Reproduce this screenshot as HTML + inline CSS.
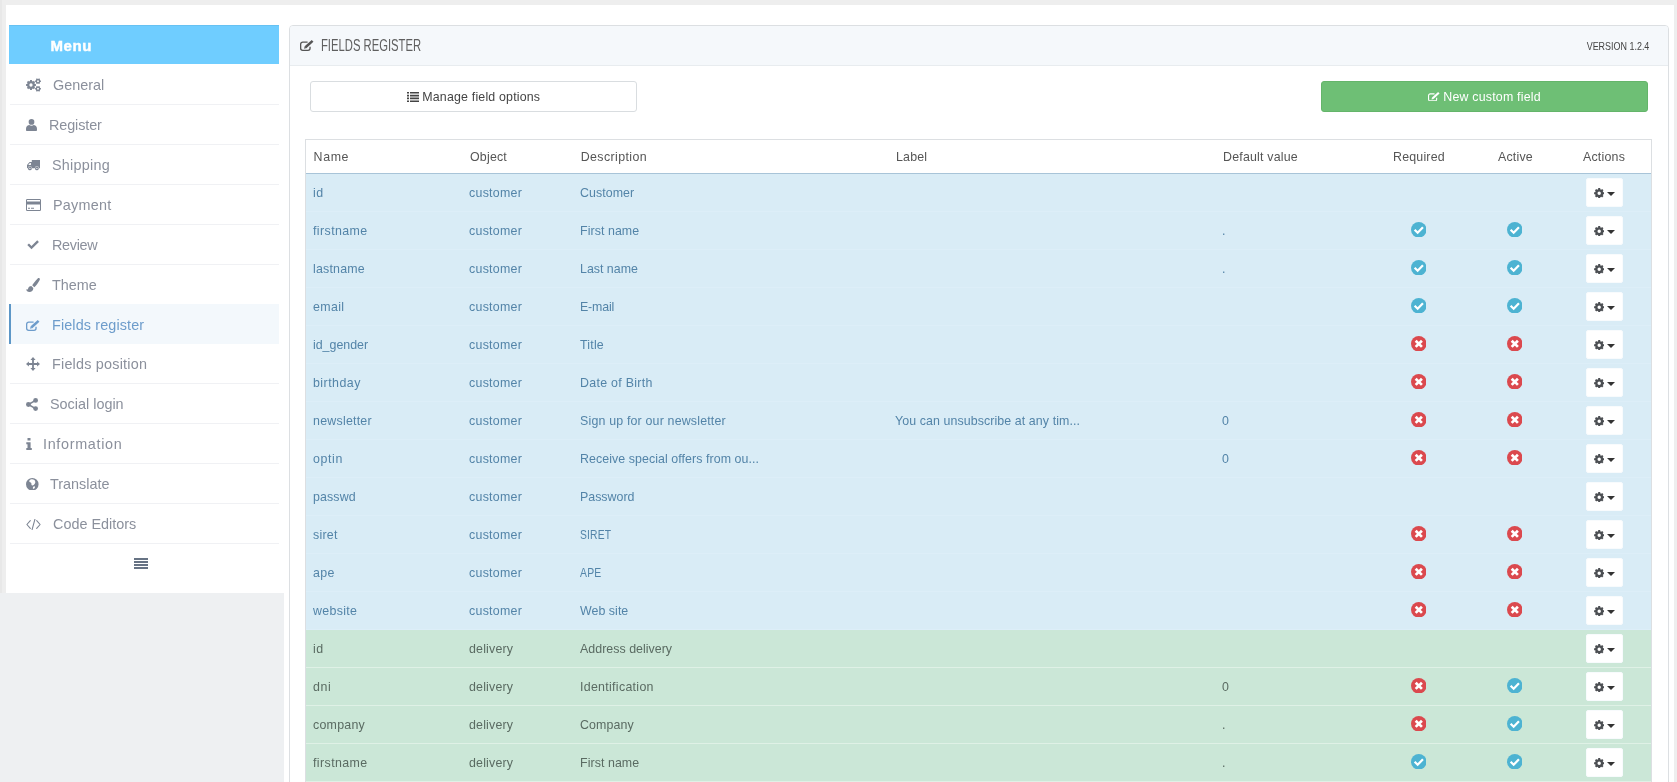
<!DOCTYPE html>
<html><head><meta charset="utf-8"><title>Fields register</title><style>
*{box-sizing:border-box;margin:0;padding:0}
html,body{width:1677px;height:782px;overflow:hidden}
body{background:#eeeeee;font-family:"Liberation Sans",sans-serif;color:#555;position:relative}
.abs{position:absolute}
#wrap{position:absolute;left:0;top:0;width:1677px;height:782px;will-change:transform}
#white-main{left:284px;top:5px;width:1390px;height:777px;background:#fff}
#white-side{left:6px;top:5px;width:278px;height:588px;background:#fff}
#menuhead{left:9px;top:25px;width:270px;height:39px;background:#6fcdff;border-top:1px solid #66c1f2;color:#fff;font-weight:bold;font-size:15px;letter-spacing:.55px;-webkit-text-stroke:.45px #fff;line-height:39px;padding-left:41.5px}
.mi{left:9px;width:270px;height:40px;color:#8b909c;font-size:14.4px;line-height:42px;white-space:nowrap}
.mi .sep{position:absolute;left:1px;right:0;bottom:-1px;height:1px;background:#f0f1f4}
.mi .icw{position:absolute;left:17px;top:1px;height:40px;display:flex;align-items:center;color:#7d8593}
.mi .tx{position:absolute;top:0}
.mi.act{z-index:2;background:#f3f8fc;border-left:2px solid #5d97c7;color:#6d9ccb}
.mi.act .icw{left:15px;color:#6d9ccb}
svg.ic{fill:currentColor;display:block}
#panel{left:289px;top:25px;width:1380px;height:800px;border:1px solid #dcdfe2;border-radius:4px;background:#fff}
#phead{left:290px;top:26px;width:1378px;height:40px;background:#f5f8fb;border-bottom:1px solid #e8ecef;border-radius:3px 3px 0 0}
#ptitle{left:321px;top:26px;height:39px;line-height:40px;font-size:15.6px;color:#5f5f5f;white-space:nowrap;transform-origin:0 50%;transform:scaleX(.7215)}
#pver{top:26px;height:39px;line-height:40px;font-size:11.2px;color:#444;white-space:nowrap;transform-origin:100% 50%;transform:scaleX(.8);right:28px}
#pico{left:300px;top:40px;color:#555}
.btn{top:81px;height:31px;border-radius:3px;font-size:12.4px;line-height:31px;white-space:nowrap}
.btn span{position:absolute;top:0}
.btn svg{position:absolute;fill:currentColor}
#b1{left:310px;width:327px;border:1px solid #d9dde0;background:#fff;color:#444}
#b2{left:1321px;width:327px;border:1px solid #64b56a;background:#6ebf75;color:#fff}
#tbl{left:305px;top:139px;width:1347px;height:660px;border:1px solid #dcdfe2;border-bottom:0}
.th{top:140px;height:33px;line-height:34px;font-size:12.4px;letter-spacing:.2px;color:#555;white-space:nowrap}
#thline{left:306px;top:173px;width:1345px;height:1px;background:#a8c4d8}
.row{left:306px;width:1345px;height:38px}
.row.b{background:#d9ecf6;color:#5384a8}
.row.g{background:#cbe7d7;color:#5a6b62}
.row .ln{position:absolute;left:0;right:0;bottom:0;height:1px}
.row.b .ln{background:#ddeef8}
.row.g .ln{background:#dff1e6}
.c{position:absolute;top:0;height:38px;line-height:38px;font-size:12.4px;letter-spacing:.22px;white-space:nowrap}
.st{position:absolute;top:9.7px}
.ab{position:absolute;left:1280px;top:4px;width:37px;height:29px;background:#fff;border:1px solid #f8fbfd;border-radius:2px;color:#4c4f53}
.ab svg.g1{position:absolute;left:6.8px;top:8.5px;fill:currentColor}
.ab i{position:absolute;left:20px;top:13px;width:0;height:0;border-left:4px solid transparent;border-right:4px solid transparent;border-top:4px solid #333}
</style></head><body>
<div id="wrap">
<div class="abs" style="left:0;top:0;width:2px;height:782px;background:#e8e8e8"></div><div class="abs" style="left:6px;top:593px;width:278px;height:189px;background:#eef0f2"></div><div class="abs" style="left:0;top:593px;width:6px;height:189px;background:#eef0f2"></div><div class="abs" id="white-main"></div><div class="abs" id="white-side"></div>
<div class="abs" id="menuhead">Menu</div>
<div class="abs mi" style="top:64px"><span class="icw"><svg class="ic" width="15" height="14" viewBox="0 0 15 14"><path fill-rule="evenodd" d="M8.88 6.04 L9.90 6.02 L9.90 7.98 L8.88 7.96 L8.43 9.06 L9.16 9.78 L7.78 11.16 L7.06 10.43 L5.96 10.88 L5.98 11.90 L4.02 11.90 L4.04 10.88 L2.94 10.43 L2.22 11.16 L0.84 9.78 L1.57 9.06 L1.12 7.96 L0.10 7.98 L0.10 6.02 L1.12 6.04 L1.57 4.94 L0.84 4.22 L2.22 2.84 L2.94 3.57 L4.04 3.12 L4.02 2.10 L5.98 2.10 L5.96 3.12 L7.06 3.57 L7.78 2.84 L9.16 4.22 L8.43 4.94Z M3.35 7.00 a1.65 1.65 0 1 0 3.30 0 a1.65 1.65 0 1 0 -3.30 0Z"/><path fill-rule="evenodd" d="M14.18 2.47 L14.90 2.42 L14.90 3.98 L14.18 3.93 L13.73 4.72 L14.12 5.32 L12.78 6.10 L12.45 5.45 L11.55 5.45 L11.22 6.10 L9.88 5.32 L10.27 4.72 L9.82 3.93 L9.10 3.98 L9.10 2.42 L9.82 2.47 L10.27 1.68 L9.88 1.08 L11.22 0.30 L11.55 0.95 L12.45 0.95 L12.78 0.30 L14.12 1.08 L13.73 1.68Z M11.05 3.20 a0.95 0.95 0 1 0 1.90 0 a0.95 0.95 0 1 0 -1.90 0Z"/><path fill-rule="evenodd" d="M14.18 10.07 L14.90 10.02 L14.90 11.58 L14.18 11.53 L13.73 12.32 L14.12 12.92 L12.78 13.70 L12.45 13.05 L11.55 13.05 L11.22 13.70 L9.88 12.92 L10.27 12.32 L9.82 11.53 L9.10 11.58 L9.10 10.02 L9.82 10.07 L10.27 9.28 L9.88 8.68 L11.22 7.90 L11.55 8.55 L12.45 8.55 L12.78 7.90 L14.12 8.68 L13.73 9.28Z M11.05 10.80 a0.95 0.95 0 1 0 1.90 0 a0.95 0.95 0 1 0 -1.90 0Z"/></svg></span><span class="tx" style="left:44px;letter-spacing:0.00px">General</span><span class="sep"></span></div>
<div class="abs mi" style="top:104px"><span class="icw"><svg class="ic" width="11" height="12" viewBox="0 0 11 12"><circle cx="5.5" cy="2.9" r="2.85"/><path d="M0.9 12 C-0.2 12 -0.1 10 0.2 8.6 C0.6 6.8 1.9 6.1 3.3 5.9 C4.5 7 6.5 7 7.7 5.9 C9.1 6.1 10.4 6.8 10.8 8.6 C11.1 10 11.2 12 10.1 12Z"/></svg></span><span class="tx" style="left:40px;letter-spacing:-0.10px">Register</span><span class="sep"></span></div>
<div class="abs mi" style="top:144px"><span class="icw"><svg class="ic" style="margin:1px 0 0 1px" width="13" height="10.6" viewBox="0 0 13 10.6"><path fill-rule="evenodd" d="M4.8 0 H13 V8.3 H0 V4.9 L2.6 2.1 H4.8Z M1.2 4.9 H3.9 V3.1 H2.9Z"/><circle cx="2.9" cy="8.4" r="2.15" fill="#fff"/><circle cx="9.9" cy="8.4" r="2.15" fill="#fff"/><circle cx="2.9" cy="8.4" r="1.85"/><circle cx="9.9" cy="8.4" r="1.85"/><circle cx="2.9" cy="8.4" r="0.6" fill="#fff"/><circle cx="9.9" cy="8.4" r="0.6" fill="#fff"/></svg></span><span class="tx" style="left:43px;letter-spacing:0.26px">Shipping</span><span class="sep"></span></div>
<div class="abs mi" style="top:184px"><span class="icw"><svg class="ic" width="15" height="12" viewBox="0 0 15 12"><path fill-rule="evenodd" d="M1.3 0 H13.7 A1.3 1.3 0 0 1 15 1.3 V10.7 A1.3 1.3 0 0 1 13.7 12 H1.3 A1.3 1.3 0 0 1 0 10.7 V1.3 A1.3 1.3 0 0 1 1.3 0Z M1 1 V2.6 H14 V1Z M1 5.4 V11 H14 V5.4Z M2 8.8 H4 V9.8 H2Z M5 8.8 H8 V9.8 H5Z"/></svg></span><span class="tx" style="left:44px;letter-spacing:0.25px">Payment</span><span class="sep"></span></div>
<div class="abs mi" style="top:224px"><span class="icw"><svg class="ic" style="margin-left:1px" width="12.2" height="9.6" viewBox="0 0 13 10"><path d="M0.3 5.3 L2.1 3.5 L4.8 6.2 L10.9 0.1 L12.7 1.9 L4.8 9.8Z"/></svg></span><span class="tx" style="left:43px;letter-spacing:-0.30px">Review</span><span class="sep"></span></div>
<div class="abs mi" style="top:264px"><span class="icw"><svg class="ic" width="14" height="14" viewBox="0 0 14 14"><path d="M12.6 0 C13.6 0 14.2 0.9 13.7 1.9 C12.4 4.4 9.8 8 8.3 9.2 L6.2 7.3 C7.6 5.2 10.6 1.3 11.7 0.4 C12 0.15 12.3 0 12.6 0Z M5.3 8.1 L7.3 9.9 C7.5 12.3 5.8 14 3.4 14 C1.6 14 0.4 12.9 0 11.3 C0.6 11.7 1.5 11.7 2 11 C2.5 10.2 2.4 8.4 5.3 8.1Z"/></svg></span><span class="tx" style="left:43px;letter-spacing:0.00px">Theme</span></div>
<div class="abs mi act" style="top:304px"><span class="icw"><svg class="ic" width="14.4" height="11" viewBox="0 0 14.4 11"><path d="M7.6 2.15 H2.7 A2.05 2.05 0 0 0 0.65 4.2 V8.3 A2.05 2.05 0 0 0 2.7 10.35 H8 A2.05 2.05 0 0 0 10.05 8.3 V6.7" stroke="currentColor" stroke-width="1.3" fill="none"/><path d="M5.5 7.3 L12.6 0.9" stroke="currentColor" stroke-width="2.5" fill="none"/><path d="M4.1 8.7 L4.7 6.2 L6.6 8.1Z"/></svg></span><span class="tx" style="left:41px;letter-spacing:0.12px">Fields register</span></div>
<div class="abs mi" style="top:343px"><span class="icw"><svg class="ic" width="14" height="14" viewBox="0 0 14 14"><path d="M7 0 L9.6 2.9 H7.9 V6.1 H11.1 V4.4 L14 7 L11.1 9.6 V7.9 H7.9 V11.1 H9.6 L7 14 L4.4 11.1 H6.1 V7.9 H2.9 V9.6 L0 7 L2.9 4.4 V6.1 H6.1 V2.9 H4.4Z"/></svg></span><span class="tx" style="left:43px;letter-spacing:0.21px">Fields position</span><span class="sep"></span></div>
<div class="abs mi" style="top:383px"><span class="icw"><svg class="ic" width="12" height="13" viewBox="0 0 12 13"><circle cx="9.6" cy="2.4" r="2.4"/><circle cx="2.4" cy="6.5" r="2.4"/><circle cx="9.6" cy="10.6" r="2.4"/><path d="M2.4 6.5 L9.6 2.4 M2.4 6.5 L9.6 10.6" stroke="currentColor" stroke-width="1.5" fill="none"/></svg></span><span class="tx" style="left:41px;letter-spacing:0.00px">Social login</span><span class="sep"></span></div>
<div class="abs mi" style="top:423px"><span class="icw"><svg class="ic" width="6" height="12" viewBox="0 0 6 12"><path d="M1.5 0 H4.5 V2.6 H1.5Z M0.3 4.3 H4.6 V10 H5.8 V12 H0.3 V10 H1.5 V6.3 H0.3Z"/></svg></span><span class="tx" style="left:34px;letter-spacing:0.67px">Information</span><span class="sep"></span></div>
<div class="abs mi" style="top:463px"><span class="icw"><svg class="ic" width="12.6" height="12.6" viewBox="0 0 13 13"><path fill-rule="evenodd" d="M6.5 0 A6.5 6.5 0 1 1 6.5 13 A6.5 6.5 0 1 1 6.5 0Z M5.6 1.3 C4.2 1.5 3.2 2.5 3.4 3.6 C3.6 4.6 4.9 4.4 5.4 5.2 C5.9 6 5.2 6.9 6 7.5 C7 8.2 8.4 6.9 9.2 5.6 C9.9 4.4 9.6 3 8.7 2.1 C7.9 1.4 6.7 1.1 5.6 1.3Z M8.3 8.6 C7.5 8.8 7 9.7 7.1 10.6 C7.2 11.4 8.1 11.3 8.8 10.5 C9.5 9.7 9.5 8.4 8.3 8.6Z"/></svg></span><span class="tx" style="left:41px;letter-spacing:0.00px">Translate</span><span class="sep"></span></div>
<div class="abs mi" style="top:503px"><span class="icw"><svg class="ic" width="15" height="11" viewBox="0 0 15 11"><path d="M4.3 1.6 L0.9 5.5 L4.3 9.4 M10.7 1.6 L14.1 5.5 L10.7 9.4 M8.9 0.3 L6.1 10.7" stroke="currentColor" stroke-width="1.1" fill="none" stroke-linecap="round" stroke-linejoin="round"/></svg></span><span class="tx" style="left:44px;letter-spacing:0.00px">Code Editors</span><span class="sep"></span></div>
<svg class="abs" style="left:134px;top:558px" width="14" height="11" viewBox="0 0 14 11"><path d="M0 0H14V2H0Z M0 3H14V5H0Z M0 6H14V8H0Z M0 9H14V11H0Z" fill="#677384"/></svg>
<div class="abs" id="panel"></div><div class="abs" id="phead"></div>
<div class="abs" id="pico"><svg class="ic" width="14.4" height="11" viewBox="0 0 14.4 11"><path d="M7.6 2.15 H2.7 A2.05 2.05 0 0 0 0.65 4.2 V8.3 A2.05 2.05 0 0 0 2.7 10.35 H8 A2.05 2.05 0 0 0 10.05 8.3 V6.7" stroke="currentColor" stroke-width="1.3" fill="none"/><path d="M5.5 7.3 L12.6 0.9" stroke="currentColor" stroke-width="2.5" fill="none"/><path d="M4.1 8.7 L4.7 6.2 L6.6 8.1Z"/></svg></div>
<div class="abs" id="ptitle">FIELDS REGISTER</div><div class="abs" id="pver">VERSION 1.2.4</div>
<div class="abs btn" id="b1"><svg style="left:96.2px;top:9.7px" width="12" height="10" viewBox="0 0 12 10"><path d="M0 0H2V1.6H0Z M3 0H12V1.6H3Z M0 2.8H2V4.4H0Z M3 2.8H12V4.4H3Z M0 5.6H2V7.2H0Z M3 5.6H12V7.2H3Z M0 8.4H2V10H0Z M3 8.4H12V10H3Z"/></svg><span style="left:111.3px;letter-spacing:.18px">Manage field options</span></div>
<div class="abs btn" id="b2"><svg style="left:106.2px;top:9.6px" width="12.4" height="9.5" viewBox="0 0 14.4 11"><path d="M7.6 2.15 H2.7 A2.05 2.05 0 0 0 0.65 4.2 V8.3 A2.05 2.05 0 0 0 2.7 10.35 H8 A2.05 2.05 0 0 0 10.05 8.3 V6.7" stroke="currentColor" stroke-width="1.3" fill="none"/><path d="M5.5 7.3 L12.6 0.9" stroke="currentColor" stroke-width="2.5" fill="none"/><path d="M4.1 8.7 L4.7 6.2 L6.6 8.1Z"/></svg><span style="left:121.3px;letter-spacing:.2px">New custom field</span></div>
<div class="abs" id="tbl"></div>
<div class="abs th" style="left:313.6px;letter-spacing:.6px">Name</div>
<div class="abs th" style="left:470.0px">Object</div>
<div class="abs th" style="left:580.7px;letter-spacing:.4px">Description</div>
<div class="abs th" style="left:896.0px">Label</div>
<div class="abs th" style="left:1223.0px">Default value</div>
<div class="abs th" style="left:1393.0px">Required</div>
<div class="abs th" style="left:1498.0px">Active</div>
<div class="abs th" style="left:1583.0px">Actions</div>
<div class="abs" id="thline"></div>
<div class="abs row b" style="top:174px"><span class="ln"></span><span class="c" style="left:7px;letter-spacing:0.60px">id</span><span class="c" style="left:163px;letter-spacing:0.27px">customer</span><span class="c" style="left:274px;letter-spacing:0.06px">Customer</span><span class="ab"><svg class="g1" width="10.4" height="10.4" viewBox="0 0 14 14"><path fill-rule="evenodd" d="M12.43 5.65 L13.87 5.63 L13.87 8.37 L12.43 8.35 L11.80 9.89 L12.82 10.89 L10.89 12.82 L9.89 11.80 L8.35 12.43 L8.37 13.87 L5.63 13.87 L5.65 12.43 L4.11 11.80 L3.11 12.82 L1.18 10.89 L2.20 9.89 L1.57 8.35 L0.13 8.37 L0.13 5.63 L1.57 5.65 L2.20 4.11 L1.18 3.11 L3.11 1.18 L4.11 2.20 L5.65 1.57 L5.63 0.13 L8.37 0.13 L8.35 1.57 L9.89 2.20 L10.89 1.18 L12.82 3.11 L11.80 4.11Z M4.70 7.00 a2.30 2.30 0 1 0 4.60 0 a2.30 2.30 0 1 0 -4.60 0Z"/></svg><i></i></span></div>
<div class="abs row b" style="top:212px"><span class="ln"></span><span class="c" style="left:7px;letter-spacing:0.41px">firstname</span><span class="c" style="left:163px;letter-spacing:0.27px">customer</span><span class="c" style="left:274px;letter-spacing:0.07px">First name</span><span class="c" style="left:916px;letter-spacing:0.20px">.</span><svg class="st" style="left:1104.5px" width="15.6" height="15.6" viewBox="0 0 15 15"><circle cx="7.5" cy="7.5" r="7.5" fill="#4db3d2"/><path d="M3.5 7.5 L6.4 10.3 L11.5 5.1" stroke="#fff" stroke-width="2.2" fill="none"/></svg><svg class="st" style="left:1200.8px" width="15.6" height="15.6" viewBox="0 0 15 15"><circle cx="7.5" cy="7.5" r="7.5" fill="#4db3d2"/><path d="M3.5 7.5 L6.4 10.3 L11.5 5.1" stroke="#fff" stroke-width="2.2" fill="none"/></svg><span class="ab"><svg class="g1" width="10.4" height="10.4" viewBox="0 0 14 14"><path fill-rule="evenodd" d="M12.43 5.65 L13.87 5.63 L13.87 8.37 L12.43 8.35 L11.80 9.89 L12.82 10.89 L10.89 12.82 L9.89 11.80 L8.35 12.43 L8.37 13.87 L5.63 13.87 L5.65 12.43 L4.11 11.80 L3.11 12.82 L1.18 10.89 L2.20 9.89 L1.57 8.35 L0.13 8.37 L0.13 5.63 L1.57 5.65 L2.20 4.11 L1.18 3.11 L3.11 1.18 L4.11 2.20 L5.65 1.57 L5.63 0.13 L8.37 0.13 L8.35 1.57 L9.89 2.20 L10.89 1.18 L12.82 3.11 L11.80 4.11Z M4.70 7.00 a2.30 2.30 0 1 0 4.60 0 a2.30 2.30 0 1 0 -4.60 0Z"/></svg><i></i></span></div>
<div class="abs row b" style="top:250px"><span class="ln"></span><span class="c" style="left:7px;letter-spacing:0.20px">lastname</span><span class="c" style="left:163px;letter-spacing:0.27px">customer</span><span class="c" style="left:274px;letter-spacing:0.00px">Last name</span><span class="c" style="left:916px;letter-spacing:0.20px">.</span><svg class="st" style="left:1104.5px" width="15.6" height="15.6" viewBox="0 0 15 15"><circle cx="7.5" cy="7.5" r="7.5" fill="#4db3d2"/><path d="M3.5 7.5 L6.4 10.3 L11.5 5.1" stroke="#fff" stroke-width="2.2" fill="none"/></svg><svg class="st" style="left:1200.8px" width="15.6" height="15.6" viewBox="0 0 15 15"><circle cx="7.5" cy="7.5" r="7.5" fill="#4db3d2"/><path d="M3.5 7.5 L6.4 10.3 L11.5 5.1" stroke="#fff" stroke-width="2.2" fill="none"/></svg><span class="ab"><svg class="g1" width="10.4" height="10.4" viewBox="0 0 14 14"><path fill-rule="evenodd" d="M12.43 5.65 L13.87 5.63 L13.87 8.37 L12.43 8.35 L11.80 9.89 L12.82 10.89 L10.89 12.82 L9.89 11.80 L8.35 12.43 L8.37 13.87 L5.63 13.87 L5.65 12.43 L4.11 11.80 L3.11 12.82 L1.18 10.89 L2.20 9.89 L1.57 8.35 L0.13 8.37 L0.13 5.63 L1.57 5.65 L2.20 4.11 L1.18 3.11 L3.11 1.18 L4.11 2.20 L5.65 1.57 L5.63 0.13 L8.37 0.13 L8.35 1.57 L9.89 2.20 L10.89 1.18 L12.82 3.11 L11.80 4.11Z M4.70 7.00 a2.30 2.30 0 1 0 4.60 0 a2.30 2.30 0 1 0 -4.60 0Z"/></svg><i></i></span></div>
<div class="abs row b" style="top:288px"><span class="ln"></span><span class="c" style="left:7px;letter-spacing:0.35px">email</span><span class="c" style="left:163px;letter-spacing:0.27px">customer</span><span class="c" style="left:274px;letter-spacing:-0.16px">E-mail</span><svg class="st" style="left:1104.5px" width="15.6" height="15.6" viewBox="0 0 15 15"><circle cx="7.5" cy="7.5" r="7.5" fill="#4db3d2"/><path d="M3.5 7.5 L6.4 10.3 L11.5 5.1" stroke="#fff" stroke-width="2.2" fill="none"/></svg><svg class="st" style="left:1200.8px" width="15.6" height="15.6" viewBox="0 0 15 15"><circle cx="7.5" cy="7.5" r="7.5" fill="#4db3d2"/><path d="M3.5 7.5 L6.4 10.3 L11.5 5.1" stroke="#fff" stroke-width="2.2" fill="none"/></svg><span class="ab"><svg class="g1" width="10.4" height="10.4" viewBox="0 0 14 14"><path fill-rule="evenodd" d="M12.43 5.65 L13.87 5.63 L13.87 8.37 L12.43 8.35 L11.80 9.89 L12.82 10.89 L10.89 12.82 L9.89 11.80 L8.35 12.43 L8.37 13.87 L5.63 13.87 L5.65 12.43 L4.11 11.80 L3.11 12.82 L1.18 10.89 L2.20 9.89 L1.57 8.35 L0.13 8.37 L0.13 5.63 L1.57 5.65 L2.20 4.11 L1.18 3.11 L3.11 1.18 L4.11 2.20 L5.65 1.57 L5.63 0.13 L8.37 0.13 L8.35 1.57 L9.89 2.20 L10.89 1.18 L12.82 3.11 L11.80 4.11Z M4.70 7.00 a2.30 2.30 0 1 0 4.60 0 a2.30 2.30 0 1 0 -4.60 0Z"/></svg><i></i></span></div>
<div class="abs row b" style="top:326px"><span class="ln"></span><span class="c" style="left:7px;letter-spacing:-0.01px">id_gender</span><span class="c" style="left:163px;letter-spacing:0.27px">customer</span><span class="c" style="left:274px;letter-spacing:0.20px">Title</span><svg class="st" style="left:1104.5px" width="15.6" height="15.6" viewBox="0 0 15 15"><circle cx="7.5" cy="7.5" r="7.5" fill="#db494e"/><path d="M4.5 4.5 L10.5 10.5 M10.5 4.5 L4.5 10.5" stroke="#fff" stroke-width="2.6" fill="none"/></svg><svg class="st" style="left:1200.8px" width="15.6" height="15.6" viewBox="0 0 15 15"><circle cx="7.5" cy="7.5" r="7.5" fill="#db494e"/><path d="M4.5 4.5 L10.5 10.5 M10.5 4.5 L4.5 10.5" stroke="#fff" stroke-width="2.6" fill="none"/></svg><span class="ab"><svg class="g1" width="10.4" height="10.4" viewBox="0 0 14 14"><path fill-rule="evenodd" d="M12.43 5.65 L13.87 5.63 L13.87 8.37 L12.43 8.35 L11.80 9.89 L12.82 10.89 L10.89 12.82 L9.89 11.80 L8.35 12.43 L8.37 13.87 L5.63 13.87 L5.65 12.43 L4.11 11.80 L3.11 12.82 L1.18 10.89 L2.20 9.89 L1.57 8.35 L0.13 8.37 L0.13 5.63 L1.57 5.65 L2.20 4.11 L1.18 3.11 L3.11 1.18 L4.11 2.20 L5.65 1.57 L5.63 0.13 L8.37 0.13 L8.35 1.57 L9.89 2.20 L10.89 1.18 L12.82 3.11 L11.80 4.11Z M4.70 7.00 a2.30 2.30 0 1 0 4.60 0 a2.30 2.30 0 1 0 -4.60 0Z"/></svg><i></i></span></div>
<div class="abs row b" style="top:364px"><span class="ln"></span><span class="c" style="left:7px;letter-spacing:0.47px">birthday</span><span class="c" style="left:163px;letter-spacing:0.27px">customer</span><span class="c" style="left:274px;letter-spacing:0.29px">Date of Birth</span><svg class="st" style="left:1104.5px" width="15.6" height="15.6" viewBox="0 0 15 15"><circle cx="7.5" cy="7.5" r="7.5" fill="#db494e"/><path d="M4.5 4.5 L10.5 10.5 M10.5 4.5 L4.5 10.5" stroke="#fff" stroke-width="2.6" fill="none"/></svg><svg class="st" style="left:1200.8px" width="15.6" height="15.6" viewBox="0 0 15 15"><circle cx="7.5" cy="7.5" r="7.5" fill="#db494e"/><path d="M4.5 4.5 L10.5 10.5 M10.5 4.5 L4.5 10.5" stroke="#fff" stroke-width="2.6" fill="none"/></svg><span class="ab"><svg class="g1" width="10.4" height="10.4" viewBox="0 0 14 14"><path fill-rule="evenodd" d="M12.43 5.65 L13.87 5.63 L13.87 8.37 L12.43 8.35 L11.80 9.89 L12.82 10.89 L10.89 12.82 L9.89 11.80 L8.35 12.43 L8.37 13.87 L5.63 13.87 L5.65 12.43 L4.11 11.80 L3.11 12.82 L1.18 10.89 L2.20 9.89 L1.57 8.35 L0.13 8.37 L0.13 5.63 L1.57 5.65 L2.20 4.11 L1.18 3.11 L3.11 1.18 L4.11 2.20 L5.65 1.57 L5.63 0.13 L8.37 0.13 L8.35 1.57 L9.89 2.20 L10.89 1.18 L12.82 3.11 L11.80 4.11Z M4.70 7.00 a2.30 2.30 0 1 0 4.60 0 a2.30 2.30 0 1 0 -4.60 0Z"/></svg><i></i></span></div>
<div class="abs row b" style="top:402px"><span class="ln"></span><span class="c" style="left:7px;letter-spacing:0.24px">newsletter</span><span class="c" style="left:163px;letter-spacing:0.27px">customer</span><span class="c" style="left:274px;letter-spacing:0.18px">Sign up for our newsletter</span><span class="c" style="left:589px;letter-spacing:0.09px">You can unsubscribe at any tim...</span><span class="c" style="left:916px;letter-spacing:0.20px">0</span><svg class="st" style="left:1104.5px" width="15.6" height="15.6" viewBox="0 0 15 15"><circle cx="7.5" cy="7.5" r="7.5" fill="#db494e"/><path d="M4.5 4.5 L10.5 10.5 M10.5 4.5 L4.5 10.5" stroke="#fff" stroke-width="2.6" fill="none"/></svg><svg class="st" style="left:1200.8px" width="15.6" height="15.6" viewBox="0 0 15 15"><circle cx="7.5" cy="7.5" r="7.5" fill="#db494e"/><path d="M4.5 4.5 L10.5 10.5 M10.5 4.5 L4.5 10.5" stroke="#fff" stroke-width="2.6" fill="none"/></svg><span class="ab"><svg class="g1" width="10.4" height="10.4" viewBox="0 0 14 14"><path fill-rule="evenodd" d="M12.43 5.65 L13.87 5.63 L13.87 8.37 L12.43 8.35 L11.80 9.89 L12.82 10.89 L10.89 12.82 L9.89 11.80 L8.35 12.43 L8.37 13.87 L5.63 13.87 L5.65 12.43 L4.11 11.80 L3.11 12.82 L1.18 10.89 L2.20 9.89 L1.57 8.35 L0.13 8.37 L0.13 5.63 L1.57 5.65 L2.20 4.11 L1.18 3.11 L3.11 1.18 L4.11 2.20 L5.65 1.57 L5.63 0.13 L8.37 0.13 L8.35 1.57 L9.89 2.20 L10.89 1.18 L12.82 3.11 L11.80 4.11Z M4.70 7.00 a2.30 2.30 0 1 0 4.60 0 a2.30 2.30 0 1 0 -4.60 0Z"/></svg><i></i></span></div>
<div class="abs row b" style="top:440px"><span class="ln"></span><span class="c" style="left:7px;letter-spacing:0.60px">optin</span><span class="c" style="left:163px;letter-spacing:0.27px">customer</span><span class="c" style="left:274px;letter-spacing:0.07px">Receive special offers from ou...</span><span class="c" style="left:916px;letter-spacing:0.20px">0</span><svg class="st" style="left:1104.5px" width="15.6" height="15.6" viewBox="0 0 15 15"><circle cx="7.5" cy="7.5" r="7.5" fill="#db494e"/><path d="M4.5 4.5 L10.5 10.5 M10.5 4.5 L4.5 10.5" stroke="#fff" stroke-width="2.6" fill="none"/></svg><svg class="st" style="left:1200.8px" width="15.6" height="15.6" viewBox="0 0 15 15"><circle cx="7.5" cy="7.5" r="7.5" fill="#db494e"/><path d="M4.5 4.5 L10.5 10.5 M10.5 4.5 L4.5 10.5" stroke="#fff" stroke-width="2.6" fill="none"/></svg><span class="ab"><svg class="g1" width="10.4" height="10.4" viewBox="0 0 14 14"><path fill-rule="evenodd" d="M12.43 5.65 L13.87 5.63 L13.87 8.37 L12.43 8.35 L11.80 9.89 L12.82 10.89 L10.89 12.82 L9.89 11.80 L8.35 12.43 L8.37 13.87 L5.63 13.87 L5.65 12.43 L4.11 11.80 L3.11 12.82 L1.18 10.89 L2.20 9.89 L1.57 8.35 L0.13 8.37 L0.13 5.63 L1.57 5.65 L2.20 4.11 L1.18 3.11 L3.11 1.18 L4.11 2.20 L5.65 1.57 L5.63 0.13 L8.37 0.13 L8.35 1.57 L9.89 2.20 L10.89 1.18 L12.82 3.11 L11.80 4.11Z M4.70 7.00 a2.30 2.30 0 1 0 4.60 0 a2.30 2.30 0 1 0 -4.60 0Z"/></svg><i></i></span></div>
<div class="abs row b" style="top:478px"><span class="ln"></span><span class="c" style="left:7px;letter-spacing:0.12px">passwd</span><span class="c" style="left:163px;letter-spacing:0.27px">customer</span><span class="c" style="left:274px;letter-spacing:0.00px">Password</span><span class="ab"><svg class="g1" width="10.4" height="10.4" viewBox="0 0 14 14"><path fill-rule="evenodd" d="M12.43 5.65 L13.87 5.63 L13.87 8.37 L12.43 8.35 L11.80 9.89 L12.82 10.89 L10.89 12.82 L9.89 11.80 L8.35 12.43 L8.37 13.87 L5.63 13.87 L5.65 12.43 L4.11 11.80 L3.11 12.82 L1.18 10.89 L2.20 9.89 L1.57 8.35 L0.13 8.37 L0.13 5.63 L1.57 5.65 L2.20 4.11 L1.18 3.11 L3.11 1.18 L4.11 2.20 L5.65 1.57 L5.63 0.13 L8.37 0.13 L8.35 1.57 L9.89 2.20 L10.89 1.18 L12.82 3.11 L11.80 4.11Z M4.70 7.00 a2.30 2.30 0 1 0 4.60 0 a2.30 2.30 0 1 0 -4.60 0Z"/></svg><i></i></span></div>
<div class="abs row b" style="top:516px"><span class="ln"></span><span class="c" style="left:7px;letter-spacing:0.25px">siret</span><span class="c" style="left:163px;letter-spacing:0.27px">customer</span><span class="c" style="left:274px;transform-origin:0 50%;transform:scaleX(0.833)">SIRET</span><svg class="st" style="left:1104.5px" width="15.6" height="15.6" viewBox="0 0 15 15"><circle cx="7.5" cy="7.5" r="7.5" fill="#db494e"/><path d="M4.5 4.5 L10.5 10.5 M10.5 4.5 L4.5 10.5" stroke="#fff" stroke-width="2.6" fill="none"/></svg><svg class="st" style="left:1200.8px" width="15.6" height="15.6" viewBox="0 0 15 15"><circle cx="7.5" cy="7.5" r="7.5" fill="#db494e"/><path d="M4.5 4.5 L10.5 10.5 M10.5 4.5 L4.5 10.5" stroke="#fff" stroke-width="2.6" fill="none"/></svg><span class="ab"><svg class="g1" width="10.4" height="10.4" viewBox="0 0 14 14"><path fill-rule="evenodd" d="M12.43 5.65 L13.87 5.63 L13.87 8.37 L12.43 8.35 L11.80 9.89 L12.82 10.89 L10.89 12.82 L9.89 11.80 L8.35 12.43 L8.37 13.87 L5.63 13.87 L5.65 12.43 L4.11 11.80 L3.11 12.82 L1.18 10.89 L2.20 9.89 L1.57 8.35 L0.13 8.37 L0.13 5.63 L1.57 5.65 L2.20 4.11 L1.18 3.11 L3.11 1.18 L4.11 2.20 L5.65 1.57 L5.63 0.13 L8.37 0.13 L8.35 1.57 L9.89 2.20 L10.89 1.18 L12.82 3.11 L11.80 4.11Z M4.70 7.00 a2.30 2.30 0 1 0 4.60 0 a2.30 2.30 0 1 0 -4.60 0Z"/></svg><i></i></span></div>
<div class="abs row b" style="top:554px"><span class="ln"></span><span class="c" style="left:7px;letter-spacing:0.35px">ape</span><span class="c" style="left:163px;letter-spacing:0.27px">customer</span><span class="c" style="left:274px;transform-origin:0 50%;transform:scaleX(0.840)">APE</span><svg class="st" style="left:1104.5px" width="15.6" height="15.6" viewBox="0 0 15 15"><circle cx="7.5" cy="7.5" r="7.5" fill="#db494e"/><path d="M4.5 4.5 L10.5 10.5 M10.5 4.5 L4.5 10.5" stroke="#fff" stroke-width="2.6" fill="none"/></svg><svg class="st" style="left:1200.8px" width="15.6" height="15.6" viewBox="0 0 15 15"><circle cx="7.5" cy="7.5" r="7.5" fill="#db494e"/><path d="M4.5 4.5 L10.5 10.5 M10.5 4.5 L4.5 10.5" stroke="#fff" stroke-width="2.6" fill="none"/></svg><span class="ab"><svg class="g1" width="10.4" height="10.4" viewBox="0 0 14 14"><path fill-rule="evenodd" d="M12.43 5.65 L13.87 5.63 L13.87 8.37 L12.43 8.35 L11.80 9.89 L12.82 10.89 L10.89 12.82 L9.89 11.80 L8.35 12.43 L8.37 13.87 L5.63 13.87 L5.65 12.43 L4.11 11.80 L3.11 12.82 L1.18 10.89 L2.20 9.89 L1.57 8.35 L0.13 8.37 L0.13 5.63 L1.57 5.65 L2.20 4.11 L1.18 3.11 L3.11 1.18 L4.11 2.20 L5.65 1.57 L5.63 0.13 L8.37 0.13 L8.35 1.57 L9.89 2.20 L10.89 1.18 L12.82 3.11 L11.80 4.11Z M4.70 7.00 a2.30 2.30 0 1 0 4.60 0 a2.30 2.30 0 1 0 -4.60 0Z"/></svg><i></i></span></div>
<div class="abs row b" style="top:592px"><span class="ln"></span><span class="c" style="left:7px;letter-spacing:0.30px">website</span><span class="c" style="left:163px;letter-spacing:0.27px">customer</span><span class="c" style="left:274px;letter-spacing:0.04px">Web site</span><svg class="st" style="left:1104.5px" width="15.6" height="15.6" viewBox="0 0 15 15"><circle cx="7.5" cy="7.5" r="7.5" fill="#db494e"/><path d="M4.5 4.5 L10.5 10.5 M10.5 4.5 L4.5 10.5" stroke="#fff" stroke-width="2.6" fill="none"/></svg><svg class="st" style="left:1200.8px" width="15.6" height="15.6" viewBox="0 0 15 15"><circle cx="7.5" cy="7.5" r="7.5" fill="#db494e"/><path d="M4.5 4.5 L10.5 10.5 M10.5 4.5 L4.5 10.5" stroke="#fff" stroke-width="2.6" fill="none"/></svg><span class="ab"><svg class="g1" width="10.4" height="10.4" viewBox="0 0 14 14"><path fill-rule="evenodd" d="M12.43 5.65 L13.87 5.63 L13.87 8.37 L12.43 8.35 L11.80 9.89 L12.82 10.89 L10.89 12.82 L9.89 11.80 L8.35 12.43 L8.37 13.87 L5.63 13.87 L5.65 12.43 L4.11 11.80 L3.11 12.82 L1.18 10.89 L2.20 9.89 L1.57 8.35 L0.13 8.37 L0.13 5.63 L1.57 5.65 L2.20 4.11 L1.18 3.11 L3.11 1.18 L4.11 2.20 L5.65 1.57 L5.63 0.13 L8.37 0.13 L8.35 1.57 L9.89 2.20 L10.89 1.18 L12.82 3.11 L11.80 4.11Z M4.70 7.00 a2.30 2.30 0 1 0 4.60 0 a2.30 2.30 0 1 0 -4.60 0Z"/></svg><i></i></span></div>
<div class="abs row g" style="top:630px"><span class="ln"></span><span class="c" style="left:7px;letter-spacing:0.60px">id</span><span class="c" style="left:163px;letter-spacing:0.18px">delivery</span><span class="c" style="left:274px;letter-spacing:0.03px">Address delivery</span><span class="ab"><svg class="g1" width="10.4" height="10.4" viewBox="0 0 14 14"><path fill-rule="evenodd" d="M12.43 5.65 L13.87 5.63 L13.87 8.37 L12.43 8.35 L11.80 9.89 L12.82 10.89 L10.89 12.82 L9.89 11.80 L8.35 12.43 L8.37 13.87 L5.63 13.87 L5.65 12.43 L4.11 11.80 L3.11 12.82 L1.18 10.89 L2.20 9.89 L1.57 8.35 L0.13 8.37 L0.13 5.63 L1.57 5.65 L2.20 4.11 L1.18 3.11 L3.11 1.18 L4.11 2.20 L5.65 1.57 L5.63 0.13 L8.37 0.13 L8.35 1.57 L9.89 2.20 L10.89 1.18 L12.82 3.11 L11.80 4.11Z M4.70 7.00 a2.30 2.30 0 1 0 4.60 0 a2.30 2.30 0 1 0 -4.60 0Z"/></svg><i></i></span></div>
<div class="abs row g" style="top:668px"><span class="ln"></span><span class="c" style="left:7px;letter-spacing:0.60px">dni</span><span class="c" style="left:163px;letter-spacing:0.18px">delivery</span><span class="c" style="left:274px;letter-spacing:0.30px">Identification</span><span class="c" style="left:916px;letter-spacing:0.20px">0</span><svg class="st" style="left:1104.5px" width="15.6" height="15.6" viewBox="0 0 15 15"><circle cx="7.5" cy="7.5" r="7.5" fill="#db494e"/><path d="M4.5 4.5 L10.5 10.5 M10.5 4.5 L4.5 10.5" stroke="#fff" stroke-width="2.6" fill="none"/></svg><svg class="st" style="left:1200.8px" width="15.6" height="15.6" viewBox="0 0 15 15"><circle cx="7.5" cy="7.5" r="7.5" fill="#4db3d2"/><path d="M3.5 7.5 L6.4 10.3 L11.5 5.1" stroke="#fff" stroke-width="2.2" fill="none"/></svg><span class="ab"><svg class="g1" width="10.4" height="10.4" viewBox="0 0 14 14"><path fill-rule="evenodd" d="M12.43 5.65 L13.87 5.63 L13.87 8.37 L12.43 8.35 L11.80 9.89 L12.82 10.89 L10.89 12.82 L9.89 11.80 L8.35 12.43 L8.37 13.87 L5.63 13.87 L5.65 12.43 L4.11 11.80 L3.11 12.82 L1.18 10.89 L2.20 9.89 L1.57 8.35 L0.13 8.37 L0.13 5.63 L1.57 5.65 L2.20 4.11 L1.18 3.11 L3.11 1.18 L4.11 2.20 L5.65 1.57 L5.63 0.13 L8.37 0.13 L8.35 1.57 L9.89 2.20 L10.89 1.18 L12.82 3.11 L11.80 4.11Z M4.70 7.00 a2.30 2.30 0 1 0 4.60 0 a2.30 2.30 0 1 0 -4.60 0Z"/></svg><i></i></span></div>
<div class="abs row g" style="top:706px"><span class="ln"></span><span class="c" style="left:7px;letter-spacing:0.25px">company</span><span class="c" style="left:163px;letter-spacing:0.18px">delivery</span><span class="c" style="left:274px;letter-spacing:0.13px">Company</span><span class="c" style="left:916px;letter-spacing:0.20px">.</span><svg class="st" style="left:1104.5px" width="15.6" height="15.6" viewBox="0 0 15 15"><circle cx="7.5" cy="7.5" r="7.5" fill="#db494e"/><path d="M4.5 4.5 L10.5 10.5 M10.5 4.5 L4.5 10.5" stroke="#fff" stroke-width="2.6" fill="none"/></svg><svg class="st" style="left:1200.8px" width="15.6" height="15.6" viewBox="0 0 15 15"><circle cx="7.5" cy="7.5" r="7.5" fill="#4db3d2"/><path d="M3.5 7.5 L6.4 10.3 L11.5 5.1" stroke="#fff" stroke-width="2.2" fill="none"/></svg><span class="ab"><svg class="g1" width="10.4" height="10.4" viewBox="0 0 14 14"><path fill-rule="evenodd" d="M12.43 5.65 L13.87 5.63 L13.87 8.37 L12.43 8.35 L11.80 9.89 L12.82 10.89 L10.89 12.82 L9.89 11.80 L8.35 12.43 L8.37 13.87 L5.63 13.87 L5.65 12.43 L4.11 11.80 L3.11 12.82 L1.18 10.89 L2.20 9.89 L1.57 8.35 L0.13 8.37 L0.13 5.63 L1.57 5.65 L2.20 4.11 L1.18 3.11 L3.11 1.18 L4.11 2.20 L5.65 1.57 L5.63 0.13 L8.37 0.13 L8.35 1.57 L9.89 2.20 L10.89 1.18 L12.82 3.11 L11.80 4.11Z M4.70 7.00 a2.30 2.30 0 1 0 4.60 0 a2.30 2.30 0 1 0 -4.60 0Z"/></svg><i></i></span></div>
<div class="abs row g" style="top:744px"><span class="ln"></span><span class="c" style="left:7px;letter-spacing:0.41px">firstname</span><span class="c" style="left:163px;letter-spacing:0.18px">delivery</span><span class="c" style="left:274px;letter-spacing:0.07px">First name</span><span class="c" style="left:916px;letter-spacing:0.20px">.</span><svg class="st" style="left:1104.5px" width="15.6" height="15.6" viewBox="0 0 15 15"><circle cx="7.5" cy="7.5" r="7.5" fill="#4db3d2"/><path d="M3.5 7.5 L6.4 10.3 L11.5 5.1" stroke="#fff" stroke-width="2.2" fill="none"/></svg><svg class="st" style="left:1200.8px" width="15.6" height="15.6" viewBox="0 0 15 15"><circle cx="7.5" cy="7.5" r="7.5" fill="#4db3d2"/><path d="M3.5 7.5 L6.4 10.3 L11.5 5.1" stroke="#fff" stroke-width="2.2" fill="none"/></svg><span class="ab"><svg class="g1" width="10.4" height="10.4" viewBox="0 0 14 14"><path fill-rule="evenodd" d="M12.43 5.65 L13.87 5.63 L13.87 8.37 L12.43 8.35 L11.80 9.89 L12.82 10.89 L10.89 12.82 L9.89 11.80 L8.35 12.43 L8.37 13.87 L5.63 13.87 L5.65 12.43 L4.11 11.80 L3.11 12.82 L1.18 10.89 L2.20 9.89 L1.57 8.35 L0.13 8.37 L0.13 5.63 L1.57 5.65 L2.20 4.11 L1.18 3.11 L3.11 1.18 L4.11 2.20 L5.65 1.57 L5.63 0.13 L8.37 0.13 L8.35 1.57 L9.89 2.20 L10.89 1.18 L12.82 3.11 L11.80 4.11Z M4.70 7.00 a2.30 2.30 0 1 0 4.60 0 a2.30 2.30 0 1 0 -4.60 0Z"/></svg><i></i></span></div>
</div></body></html>
